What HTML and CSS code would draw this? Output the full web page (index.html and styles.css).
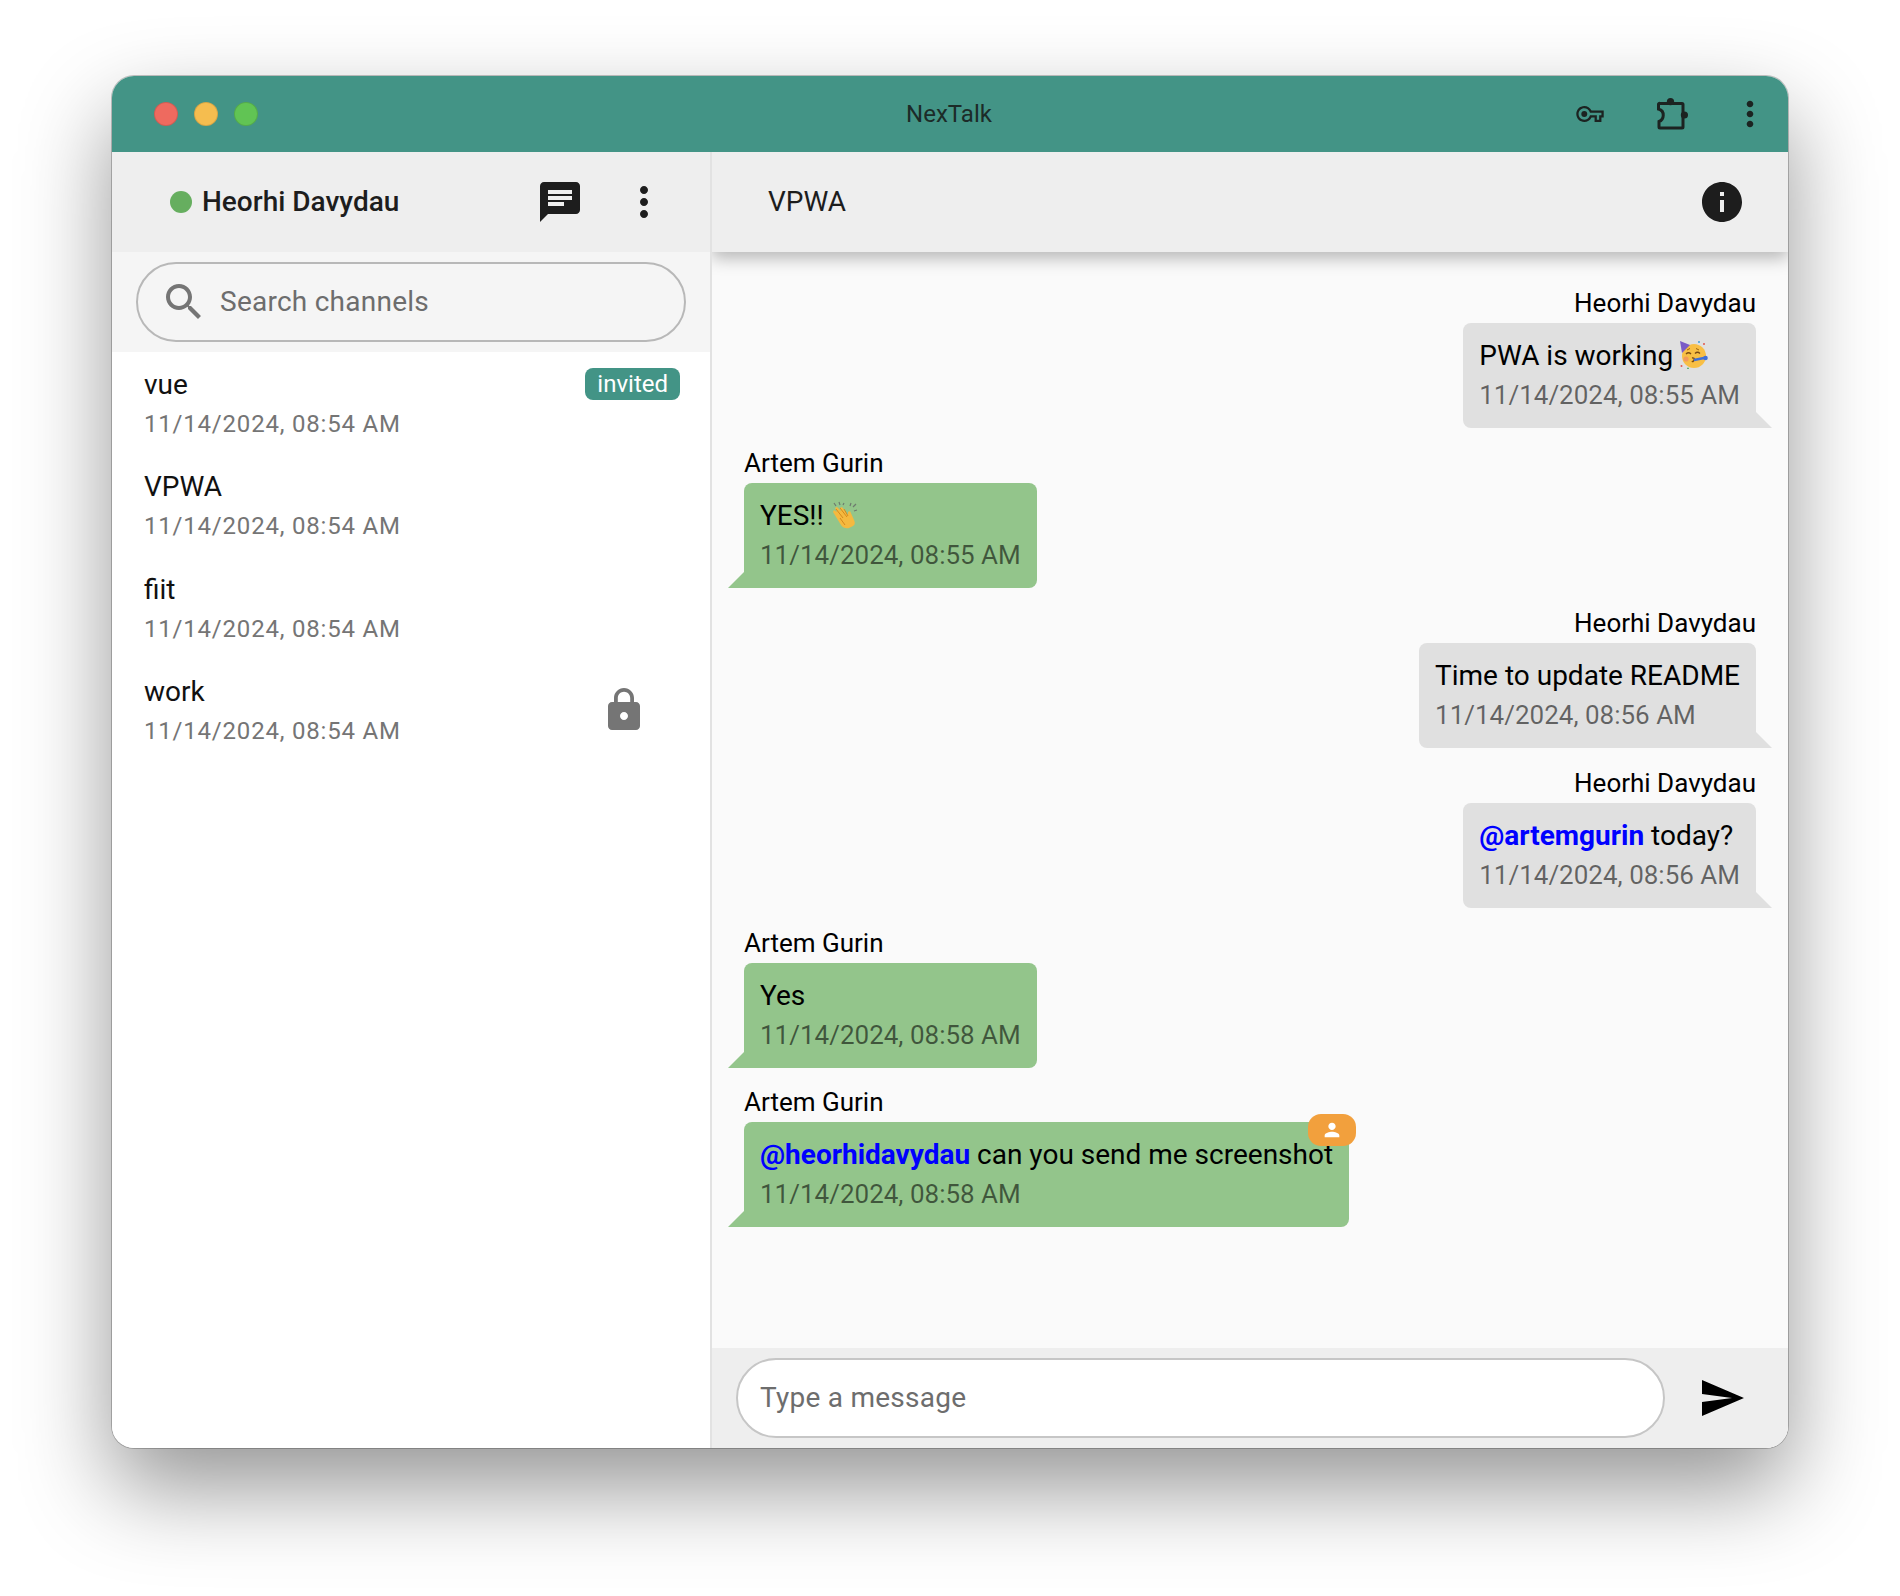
FILE: index.html

```html
<!DOCTYPE html>
<html lang="en">
<head>
  <meta charset="UTF-8" />
  <title>NexTalk</title>
  <link rel="stylesheet" href="styles.css">
</head>
<body>
  <div class="window">
    <div class="titlebar">
      <div class="lights">
        <span class="light red"></span>
        <span class="light yellow"></span>
        <span class="light green"></span>
      </div>
      <div class="app-name">NexTalk</div>
      <div class="title-icons">
        <svg class="key-icon" viewBox="0 0 24 14"><path d="M22 14h-6v-4h-2.68C12.18 12.42 9.72 14 7 14c-3.86 0-7-3.14-7-7s3.14-7 7-7c2.72 0 5.17 1.58 6.32 4H24v6h-2v4zm-4-2h2V8h2V6H11.94l-.23-.67C11.01 3.34 9.11 2 7 2 4.24 2 2 4.24 2 7s2.24 5 5 5c2.11 0 4.01-1.34 4.71-3.33L11.94 8H18v4z"/><circle cx="7" cy="7" r="2.6"/></svg>
        <svg class="puzzle-icon" viewBox="0 0 32 32"><circle cx="14.5" cy="3.6" r="3.6"/><circle cx="28.4" cy="17" r="3.6"/><path class="puzzle-line" d="M4 5.500H26a1 1 0 0 1 1 1V29a1 1 0 0 1-1 1H4a1 1 0 0 1-1-1V23.500C8 22 9.500 13 2.500 11V6.500a1 1 0 0 1 1.500-1z"/></svg>
        <svg class="dots-icon" viewBox="0 0 24 24"><path d="M12 8c1.100 0 2-.9 2-2s-.9-2-2-2-2 .9-2 2 .9 2 2 2zm0 2c-1.100 0-2 .9-2 2s.9 2 2 2 2-.9 2-2-.9-2-2-2zm0 6c-1.100 0-2 .9-2 2s.9 2 2 2 2-.9 2-2-.9-2-2-2z"/></svg>
      </div>
    </div>
    <div class="main">
      <div class="sidebar">
        <div class="side-head">
          <span class="status-dot"></span>
          <span class="user-name">Heorhi Davydau</span>
          <svg class="icon-48 chat-icon" viewBox="0 0 24 24"><path d="M20 2H4c-1.100 0-1.990.9-1.990 2L2 22l4-4h14c1.100 0 2-.9 2-2V4c0-1.100-.9-2-2-2zM6 9h12v2H6V9zm8 5H6v-2h8v2zm4-6H6V6h12v2z"/></svg>
          <svg class="icon-48 more-icon" viewBox="0 0 24 24"><path d="M12 8c1.100 0 2-.9 2-2s-.9-2-2-2-2 .9-2 2 .9 2 2 2zm0 2c-1.100 0-2 .9-2 2s.9 2 2 2 2-.9 2-2-.9-2-2-2zm0 6c-1.100 0-2 .9-2 2s.9 2 2 2 2-.9 2-2-.9-2-2-2z"/></svg>
        </div>
        <div class="search-band">
          <div class="search-box">
            <svg class="icon-48 search-icon" viewBox="0 0 24 24"><path d="M15.500 14h-.79l-.28-.27C15.410 12.590 16 11.110 16 9.500 16 5.910 13.090 3 9.500 3S3 5.910 3 9.500 5.910 16 9.500 16c1.610 0 3.090-.59 4.230-1.570l.27.280v.79l5 4.990L20.490 19l-4.990-5zm-6 0C7.010 14 5 11.990 5 9.500S7.010 5 9.500 5 14 7.010 14 9.500 11.990 14 9.500 14z"/></svg>
            <span class="placeholder">Search channels</span>
          </div>
        </div>
        <div class="channels">
          <div class="channel">
            <div class="channel-text">
              <div class="channel-name">vue</div>
              <div class="channel-time">11/14/2024, 08:54 AM</div>
            </div>
            <span class="badge">invited</span>
          </div>
          <div class="channel">
            <div class="channel-text">
              <div class="channel-name">VPWA</div>
              <div class="channel-time">11/14/2024, 08:54 AM</div>
            </div>
          </div>
          <div class="channel">
            <div class="channel-text">
              <div class="channel-name">fiit</div>
              <div class="channel-time">11/14/2024, 08:54 AM</div>
            </div>
          </div>
          <div class="channel">
            <div class="channel-text">
              <div class="channel-name">work</div>
              <div class="channel-time">11/14/2024, 08:54 AM</div>
            </div>
            <svg class="icon-48 lock-icon" viewBox="0 0 24 24"><path d="M18 8h-1V6c0-2.760-2.240-5-5-5S7 3.240 7 6v2H6c-1.100 0-2 .9-2 2v10c0 1.100.9 2 2 2h12c1.100 0 2-.9 2-2V10c0-1.100-.9-2-2-2zm-6 9c-1.100 0-2-.9-2-2s.9-2 2-2 2 .9 2 2-.9 2-2 2zm3.100-9H8.900V6c0-1.710 1.390-3.100 3.100-3.100 1.710 0 3.100 1.390 3.100 3.100v2z"/></svg>
          </div>
        </div>
      </div>
      <div class="chat">
        <div class="chat-head">
          <span class="chat-title">VPWA</span>
          <svg class="icon-48 info-icon" viewBox="0 0 24 24"><path d="M12 2C6.480 2 2 6.480 2 12s4.480 10 10 10 10-4.480 10-10S17.520 2 12 2zm1 15h-2v-6h2v6zm0-8h-2V7h2v2z"/></svg>
        </div>
        <div class="messages">
          <div class="msg sent">
            <div class="msg-name">Heorhi Davydau</div>
            <div class="bubble">
              <div class="msg-text">PWA is working
                <svg class="emoji" viewBox="0 0 28 28">
                  <circle cx="14" cy="15" r="12" fill="#f8bf45"/>
                  <path d="M0 0l10 4-8 8z" fill="#7a5bc7"/>
                  <path d="M6 13q2.500-2.500 5 0M15 12.500q2.500-2.500 5 0" fill="none" stroke="#7b4a12" stroke-width="1.300"/>
                  <path d="M7 9l3-1.500M16 7.500l3 1.500" fill="none" stroke="#9a6316" stroke-width="1"/>
                  <circle cx="6" cy="18" r="2.600" fill="#f29a5c"/>
                  <path d="M12 17q3-.5 2 2t-2 1" fill="none" stroke="#7b4a12" stroke-width="1.400"/>
                  <path d="M14 19l10-2" stroke="#3f6fd8" stroke-width="2.600"/>
                  <circle cx="25.500" cy="17" r="2.300" fill="#3f6fd8"/>
                  <circle cx="1.500" cy="25" r="1" fill="#e2574c"/>
                  <circle cx="24" cy="3" r="1" fill="#e2574c"/>
                  <circle cx="19" cy="1" r="1" fill="#3f9fd8"/>
                  <circle cx="8" cy="27.500" r="1" fill="#59b36a"/>
                </svg>
              </div>
              <div class="msg-time">11/14/2024, 08:55 AM</div>
            </div>
          </div>
          <div class="msg received">
            <div class="msg-name">Artem Gurin</div>
            <div class="bubble">
              <div class="msg-text">YES!!
                <svg class="emoji" viewBox="0 0 28 28">
                  <path d="M2 11l8 13q3 4 8 3l4-2q3-2 1-6l-4-9-2 1v3L11 6 9 7l1 3-4-4-2 1 2 4-3-2z" fill="#f5b93f"/>
                  <path d="M5 8l7 9M9 7l7 9M13 8l4 7M9 17l5 7" fill="none" stroke="#d48a1e" stroke-width="1"/>
                  <path d="M3 2l2 3M8 1l1 3M13 2l-1 2M20 2l-1 3M25 3l-3 3M26 9l-3 1" stroke="#6d7a6e" stroke-width="1.200"/>
                </svg>
              </div>
              <div class="msg-time">11/14/2024, 08:55 AM</div>
            </div>
          </div>
          <div class="msg sent">
            <div class="msg-name">Heorhi Davydau</div>
            <div class="bubble">
              <div class="msg-text">Time to update README</div>
              <div class="msg-time">11/14/2024, 08:56 AM</div>
            </div>
          </div>
          <div class="msg sent">
            <div class="msg-name">Heorhi Davydau</div>
            <div class="bubble">
              <div class="msg-text"><span class="mention">@artemgurin</span> today?</div>
              <div class="msg-time">11/14/2024, 08:56 AM</div>
            </div>
          </div>
          <div class="msg received">
            <div class="msg-name">Artem Gurin</div>
            <div class="bubble">
              <div class="msg-text">Yes</div>
              <div class="msg-time">11/14/2024, 08:58 AM</div>
            </div>
          </div>
          <div class="msg received">
            <div class="msg-name">Artem Gurin</div>
            <div class="bubble">
              <span class="mention-badge">
                <svg viewBox="0 0 24 24"><path d="M12 12c2.210 0 4-1.790 4-4s-1.790-4-4-4-4 1.790-4 4 1.790 4 4 4zm0 2c-2.670 0-8 1.340-8 4v2h16v-2c0-2.660-5.330-4-8-4z"/></svg>
              </span>
              <div class="msg-text"><span class="mention">@heorhidavydau</span> can you send me screenshot</div>
              <div class="msg-time">11/14/2024, 08:58 AM</div>
            </div>
          </div>
        </div>
        <div class="composer">
          <div class="composer-box">Type a message</div>
          <svg class="icon-48 send-icon" viewBox="0 0 24 24"><path d="M2.010 21L23 12 2.010 3 2 10l15 2-15 2z"/></svg>
        </div>
      </div>
    </div>
  </div>
</body>
</html>
```

FILE: styles.css

```css
* {
  box-sizing: border-box;
}
body {
  margin: 0;
  padding: 76px 112px 148px;
  height: 1596px;
  background: #ffffff;
  font-family: Roboto, "Liberation Sans", sans-serif;
  overflow: hidden;
}
.window {
  display: flex;
  flex-direction: column;
  height: 1372px;
  border-radius: 22px;
  overflow: hidden;
  background: #fff;
  box-shadow: 0 0 0 1px rgba(0,0,0,0.22), 0 40px 90px rgba(0,0,0,0.42);
}
.titlebar {
  flex: 0 0 76px;
  display: grid;
  grid-template-columns: 1fr auto 1fr;
  align-items: center;
  background: #439486;
  padding: 0 18px 0 42px;
}
.lights {
  display: flex;
  gap: 16px;
}
.light {
  width: 24px;
  height: 24px;
  border-radius: 50%;
  border: 1px solid rgba(0,0,0,0.12);
}
.red { background: #ee6a5f; }
.yellow { background: #f5bd4f; }
.green { background: #61c454; }
.app-name {
  font-size: 24px;
  color: #1c2b28;
  padding-right: 26px;
}
.title-icons {
  display: flex;
  align-items: center;
  justify-content: flex-end;
  fill: #1c2321;
}
.key-icon {
  width: 28px;
  height: 16px;
  margin-right: 52px;
}
.puzzle-icon {
  width: 32px;
  height: 32px;
  margin-right: 42px;
}
.puzzle-line {
  fill: none;
  stroke: #1c2321;
  stroke-width: 3;
}
.dots-icon {
  width: 40px;
  height: 40px;
}
.main {
  flex: 1;
  display: flex;
  min-height: 0;
}
.sidebar {
  flex: 0 0 600px;
  display: flex;
  flex-direction: column;
  border-right: 2px solid #e2e2e2;
  background: #fff;
}
.icon-48 {
  width: 48px;
  height: 48px;
  flex: none;
}
.side-head {
  flex: 0 0 100px;
  display: flex;
  align-items: center;
  background: #eeeeee;
  padding-left: 58px;
  fill: #1d1d1d;
}
.status-dot {
  width: 22px;
  height: 22px;
  border-radius: 50%;
  background: #66ae5f;
  margin-right: 10px;
}
.user-name {
  flex: 1;
  font-size: 28px;
  font-weight: 500;
  color: #1d1d1d;
  padding-bottom: 2px;
}
.more-icon {
  margin: 0 42px 0 36px;
}
.search-band {
  flex: 0 0 100px;
  background: #f5f5f5;
  padding: 10px 24px;
}
.search-box {
  height: 80px;
  border: 2px solid #b8b8b8;
  border-radius: 40px;
  display: flex;
  align-items: center;
  padding-left: 22px;
  fill: #757575;
  color: #6d6d6d;
  font-size: 28px;
  letter-spacing: 0.25px;
}
.placeholder {
  margin-left: 12px;
  padding-bottom: 2px;
}
.channel {
  height: 102.4px;
  display: flex;
  padding: 13px 32px 0;
}
.channel-text {
  flex: 1;
}
.channel-name {
  font-size: 28px;
  line-height: 40px;
  color: #111;
}
.channel-time {
  font-size: 24px;
  letter-spacing: 0.8px;
  line-height: 38px;
  color: #757575;
}
.badge {
  height: 32px;
  margin: 3px -2px 0 0;
  padding: 0 12px;
  border-radius: 8px;
  background: #439486;
  color: #fff;
  font-size: 24px;
  line-height: 32px;
}
.lock-icon {
  fill: #757575;
  margin: 14px 30px 0 0;
}
.chat {
  flex: 1;
  display: flex;
  flex-direction: column;
  background: #fafafa;
  min-width: 0;
  overflow: hidden;
}
.chat-head {
  flex: 0 0 100px;
  display: flex;
  align-items: center;
  justify-content: space-between;
  background: #eeeeee;
  padding: 0 42px 0 56px;
  box-shadow: 0 6px 16px rgba(0,0,0,0.28);
  position: relative;
  fill: #1d1d1d;
}
.chat-title {
  font-size: 28px;
  color: #1d1d1d;
  padding-bottom: 2px;
}
.messages {
  flex: 1;
  display: flex;
  flex-direction: column;
  gap: 17.9px;
  padding: 34px 32px 0;
}
.msg {
  display: flex;
  flex-direction: column;
}
.msg.sent {
  align-items: flex-end;
}
.msg.received {
  align-items: flex-start;
}
.msg-name {
  height: 34px;
  margin-bottom: 3px;
  font-size: 26px;
  line-height: 34px;
  color: #000;
}
.bubble {
  position: relative;
  height: 105px;
  padding: 13px 16px 0;
  border-radius: 8px;
}
.sent .bubble {
  background: #e0e0e0;
  border-bottom-right-radius: 0;
}
.received .bubble {
  background: #93c58b;
  border-bottom-left-radius: 0;
}
.bubble::after {
  content: "";
  position: absolute;
  bottom: 0;
  width: 0;
  height: 0;
  border-bottom: 16px solid;
}
.sent .bubble::after {
  right: -16px;
  border-right: 16px solid transparent;
  border-bottom-color: #e0e0e0;
}
.received .bubble::after {
  left: -16px;
  border-left: 16px solid transparent;
  border-bottom-color: #93c58b;
}
.msg-text {
  font-size: 28px;
  line-height: 40px;
  color: #000;
  white-space: nowrap;
}
.msg-time {
  font-size: 26px;
  line-height: 39px;
  color: rgba(0,0,0,0.56);
  white-space: nowrap;
}
.mention {
  color: #0000ff;
  font-weight: 700;
}
.emoji {
  width: 28px;
  height: 28px;
  vertical-align: -4px;
}
.mention-badge {
  position: absolute;
  top: -8px;
  right: -7px;
  width: 48px;
  height: 32px;
  border-radius: 13px;
  background: #f2a03d;
  display: flex;
  align-items: center;
  justify-content: center;
  fill: #fff;
}
.mention-badge svg {
  width: 22px;
  height: 22px;
}
.composer {
  flex: 0 0 100px;
  display: flex;
  align-items: center;
  background: #eeeeee;
  padding: 0 42px 0 24px;
}
.composer-box {
  flex: 1;
  height: 80px;
  border: 2px solid #c6c6c6;
  border-radius: 40px;
  background: #fff;
  padding-left: 22px;
  font-size: 28px;
  letter-spacing: 0.25px;
  line-height: 76px;
  color: #6d6d6d;
}
.send-icon {
  margin-left: 33px;
}
```
